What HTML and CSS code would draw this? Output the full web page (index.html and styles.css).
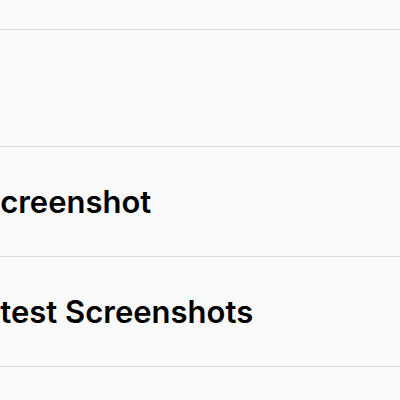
FILE: index.html
```html
<!DOCTYPE html>
<html lang="en">
<head>
  <meta charset="UTF-8" />
  <title>Screenshots</title>
  <link rel="stylesheet" href="styles.css">
</head>
<body>

  <div class="list">
    <div class="top-gap"></div>
    <div class="row row-empty"></div>
    <div class="row"><span class="label label-shot">Screenshot</span></div>
    <div class="row"><span class="label label-latest">Latest Screenshots</span></div>
  </div>

</body>
</html>
```

FILE: styles.css
```css
body {
  font-family: Inter, "Noto Sans", sans-serif;
  background-color: #f9f9f9;
  margin: 0;
  overflow: hidden;
}
.list {
  display: flex;
  flex-direction: column;
}
.top-gap {
  height: 29px;
  border-bottom: 1px solid #d8d8d8;
}
.row {
  display: flex;
  align-items: center;
  height: 109px;
  border-bottom: 1px solid #d8d8d8;
  white-space: nowrap;
}
.row-empty {
  height: 116px;
}
.label {
  font-size: 31px;
  font-weight: 600;
  color: #000;
}
.label-shot {
  margin-left: -20px;
}
.label-latest {
  margin-left: -35px;
}
```
